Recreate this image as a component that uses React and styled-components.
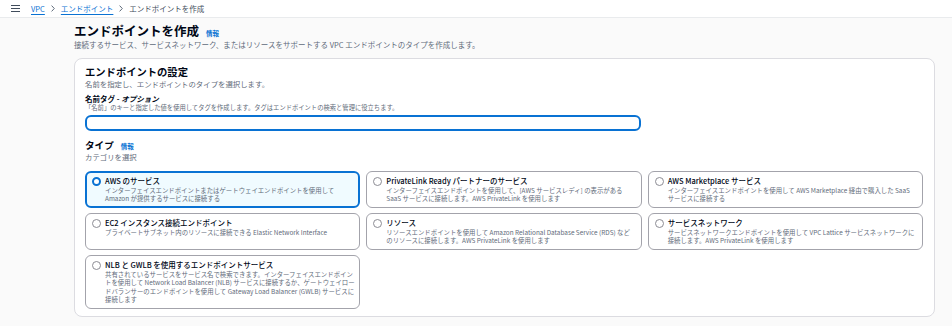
import React from 'react'
import styled, { createGlobalStyle } from 'styled-components'

const GlobalStyle = createGlobalStyle`
  body {
    margin: 0;
    background: #fafafa;
    font-family: "Noto Sans CJK JP", "Open Sans", sans-serif;
    color: #000716;
  }
`;

const TopBar = styled.div`
  height: 18px;
  background: #ffffff;
  border-bottom: 1px solid #e9ebed;
  display: flex;
  align-items: center;
  padding-left: 11px;
  box-sizing: border-box;
`;

const Crumbs = styled.nav`
  display: flex;
  align-items: center;
  margin-left: 11px;
  font-size: 7.5px;
  line-height: 10px;
`;

const CrumbLink = styled.a`
  color: #0972d3;
  text-decoration: underline;
  text-underline-offset: 1.5px;
`;

const CrumbCurrent = styled.span`
  color: #414d5c;
`;

const Chevron = styled.span`
  display: inline-flex;
  margin: 0 6px;
`;

const Main = styled.main`
  padding: 5px 17px 8px 74px;
`;

const TitleRow = styled.div`
  display: flex;
  align-items: baseline;
`;

const Title = styled.h1`
  margin: 0;
  font-size: 12.5px;
  line-height: 16px;
  font-weight: 700;
`;

const Info = styled.a`
  margin-left: 7px;
  font-size: 6.5px;
  font-weight: 700;
  color: #0972d3;
`;

const Lead = styled.p`
  margin: 1px 0 0;
  font-size: 7.5px;
  line-height: 10px;
  color: #5f6b7a;
`;

const Panel = styled.section`
  margin-top: 8px;
  background: #ffffff;
  border: 1px solid #dcdce1;
  border-radius: 8px;
  padding: 6px 11px 7px 10px;
`;

const PanelTitle = styled.h2`
  margin: 0;
  font-size: 10.3px;
  line-height: 14px;
  font-weight: 700;
`;

const Hint = styled.p`
  margin: 0;
  font-size: ${p => p.$size || 7.4}px;
  line-height: ${p => p.$lh || 10}px;
  color: #5f6b7a;
`;

const FieldLabel = styled.div`
  margin-top: 5px;
  font-size: 7.5px;
  line-height: 10px;
  font-weight: 700;

  em {
    font-style: italic;
  }
`;

const Input = styled.input`
  display: block;
  margin-top: 3px;
  width: 556px;
  height: 16px;
  box-sizing: border-box;
  border: 2px solid #0972d3;
  border-radius: 6px;
  outline: none;
  background: #fff;
`;

const SubHeading = styled.div`
  display: flex;
  align-items: baseline;
  margin-top: 8px;

  h3 {
    margin: 0;
    font-size: 9.6px;
    line-height: 13px;
    font-weight: 700;
  }
`;

const Grid = styled.div`
  margin-top: 10px;
  display: grid;
  grid-template-columns: repeat(3, 1fr);
  column-gap: 6px;
  row-gap: 5px;
`;

const Tile = styled.label`
  display: flex;
  gap: 4px;
  border-radius: 6px;
  box-sizing: border-box;
  padding: ${p => (p.$selected ? '2.5px 3.5px 2.5px 5px' : '3.5px 4.5px 3.5px 6px')};
  border: ${p => (p.$selected ? '2px solid #0972d3' : '1px solid #a3a3ab')};
  background: ${p => (p.$selected ? '#f0fbff' : '#ffffff')};
`;

const Radio = styled.span`
  flex: none;
  width: 9px;
  height: 9px;
  margin-top: 1px;
  box-sizing: border-box;
  border-radius: 50%;
  border: ${p => (p.$on ? '2.6px solid #0972d3' : '1px solid #8c8c94')};
  background: #fff;
`;

const TileBody = styled.div`
  display: flex;
  flex-direction: column;
  min-width: 0;
`;

const TileTitle = styled.span`
  font-size: 7.5px;
  line-height: 10px;
  font-weight: 500;
`;

const TileDesc = styled.span`
  margin-top: 1px;
  font-size: 6.4px;
  line-height: 8.5px;
  color: #5f6b7a;
`;

const Hamburger = () => (
  <svg width="9" height="7" viewBox="0 0 9 7">
    <path d="M0 0.5h9M0 3.5h9M0 6.5h9" stroke="#414d5c" strokeWidth="1.1" />
  </svg>
);

const Arrow = () => (
  <svg width="4" height="7" viewBox="0 0 4 7">
    <path d="M0.6 0.6L3.3 3.5L0.6 6.4" fill="none" stroke="#5f6b7a" strokeWidth="1" />
  </svg>
);

const types = [
  {
    title: 'AWS のサービス',
    desc: 'インターフェイスエンドポイントまたはゲートウェイエンドポイントを使用して Amazon が提供するサービスに接続する',
    selected: true,
  },
  {
    title: 'PrivateLink Ready パートナーのサービス',
    desc: 'インターフェイスエンドポイントを使用して、[AWS サービスレディ] の表示がある SaaS サービスに接続します。AWS PrivateLink を使用します',
  },
  {
    title: 'AWS Marketplace サービス',
    desc: 'インターフェイスエンドポイントを使用して AWS Marketplace 経由で購入した SaaS サービスに接続する',
  },
  {
    title: 'EC2 インスタンス接続エンドポイント',
    desc: 'プライベートサブネット内のリソースに接続できる Elastic Network Interface',
  },
  {
    title: 'リソース',
    desc: 'リソースエンドポイントを使用して Amazon Relational Database Service (RDS) などのリソースに接続します。AWS PrivateLink を使用します',
  },
  {
    title: 'サービスネットワーク',
    desc: 'サービスネットワークエンドポイントを使用して VPC Lattice サービスネットワークに接続します。AWS PrivateLink を使用します',
  },
  {
    title: 'NLB と GWLB を使用するエンドポイントサービス',
    desc: '共有されているサービスをサービス名で検索できます。インターフェイスエンドポイントを使用して Network Load Balancer (NLB) サービスに接続するか、ゲートウェイロードバランサーのエンドポイントを使用して Gateway Load Balancer (GWLB) サービスに接続します',
  },
];

export default function App() {
  return (
    <>
      <GlobalStyle />
      <TopBar>
        <Hamburger />
        <Crumbs>
          <CrumbLink>VPC</CrumbLink>
          <Chevron><Arrow /></Chevron>
          <CrumbLink>エンドポイント</CrumbLink>
          <Chevron><Arrow /></Chevron>
          <CrumbCurrent>エンドポイントを作成</CrumbCurrent>
        </Crumbs>
      </TopBar>
      <Main>
        <TitleRow>
          <Title>エンドポイントを作成</Title>
          <Info>情報</Info>
        </TitleRow>
        <Lead>接続するサービス、サービスネットワーク、またはリソースをサポートする VPC エンドポイントのタイプを作成します。</Lead>
        <Panel>
          <PanelTitle>エンドポイントの設定</PanelTitle>
          <Hint>名前を指定し、エンドポイントのタイプを選択します。</Hint>
          <FieldLabel>名前タグ - <em>オプション</em></FieldLabel>
          <Hint $size={6.3} $lh={8}>「名前」のキーと指定した値を使用してタグを作成します。タグはエンドポイントの検索と管理に役立ちます。</Hint>
          <Input />
          <SubHeading>
            <h3>タイプ</h3>
            <Info>情報</Info>
          </SubHeading>
          <Hint $lh={9}>カテゴリを選択</Hint>
          <Grid>
            {types.map(t => (
              <Tile key={t.title} $selected={t.selected}>
                <Radio $on={t.selected} />
                <TileBody>
                  <TileTitle>{t.title}</TileTitle>
                  <TileDesc>{t.desc}</TileDesc>
                </TileBody>
              </Tile>
            ))}
          </Grid>
        </Panel>
      </Main>
    </>
  );
}
